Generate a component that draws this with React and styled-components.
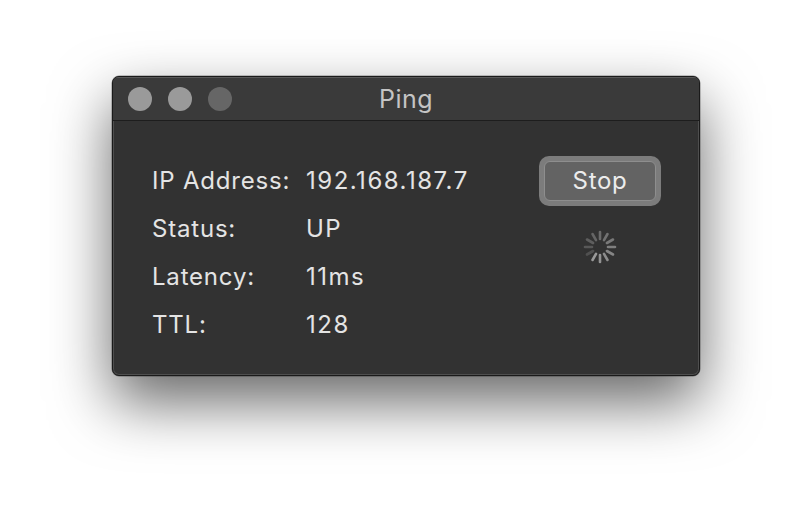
import React from 'react';
import styled, { createGlobalStyle } from 'styled-components';

const GlobalStyle = createGlobalStyle`
  html, body {
    margin: 0;
    padding: 0;
    background: #ffffff;
    font-family: Inter, "Liberation Sans", sans-serif;
  }
`;

const Page = styled.div`
  width: 812px;
  height: 524px;
  padding: 76px 0 0 112px;
  box-sizing: border-box;
`;

const Window = styled.div`
  width: 588px;
  height: 300px;
  border-radius: 7px;
  background: #323232;
  border: 1px solid #1a1a1a;
  box-sizing: border-box;
  box-shadow: 0 0 0 0.5px rgba(0, 0, 0, 0.4), inset 0 0 0 1px #4e4e4e,
    0 26px 60px rgba(0, 0, 0, 0.6);
  overflow: hidden;
  display: flex;
  flex-direction: column;
`;

const TitleBar = styled.div`
  height: 43px;
  flex-shrink: 0;
  background: #3a3a3a;
  border-bottom: 1px solid #1d1d1d;
  box-shadow: inset 0 1px 0 #585858;
  display: flex;
  align-items: center;
  padding-left: 15px;
  position: relative;
`;

const Lights = styled.div`
  display: flex;
  gap: 16px;
`;

const Light = styled.span`
  width: 24px;
  height: 24px;
  border-radius: 50%;
  background: ${(p) => (p.dim ? '#666666' : '#9a9a9a')};
`;

const Title = styled.div`
  position: absolute;
  left: 0;
  right: 0;
  top: 0;
  bottom: 0;
  display: flex;
  align-items: center;
  justify-content: center;
  color: #c4c4c4;
  font-size: 25px;
  letter-spacing: 0.5px;
  pointer-events: none;
`;

const Body = styled.div`
  flex: 1;
  display: flex;
  padding: 35px 38px 0 39px;
`;

const Info = styled.div`
  flex: 1;
  display: grid;
  grid-template-columns: 154px auto;
  grid-auto-rows: 48px;
  align-items: center;
  color: #e4e4e4;
  font-size: 24px;
  letter-spacing: 0.8px;
`;

const Value = styled.span`
  letter-spacing: 1.5px;
`;

const Side = styled.div`
  display: flex;
  flex-direction: column;
  align-items: center;
`;

const FocusRing = styled.div`
  padding: 5px;
  border-radius: 10px;
  background: #7c7c7c;
`;

const Button = styled.button`
  width: 112px;
  height: 40px;
  border-radius: 6px;
  border: 1px solid #8e8e8e;
  background: #636363;
  color: #ececec;
  font-family: inherit;
  font-size: 24px;
  letter-spacing: 0.7px;
  padding: 0 0 2px;
`;

const Spinner = styled.svg`
  margin-top: 24px;
`;

const rows = [
  ['IP Address:', '192.168.187.7'],
  ['Status:', 'UP'],
  ['Latency:', '11ms'],
  ['TTL:', '128'],
];

const spokes = Array.from({ length: 12 }, (_, i) => i);

export default function App() {
  return (
    <Page>
      <GlobalStyle />
      <Window>
        <TitleBar>
          <Lights>
            <Light />
            <Light />
            <Light dim />
          </Lights>
          <Title>Ping</Title>
        </TitleBar>
        <Body>
          <Info>
            {rows.map(([k, v]) => (
              <React.Fragment key={k}>
                <span>{k}</span>
                <Value>{v}</Value>
              </React.Fragment>
            ))}
          </Info>
          <Side>
            <FocusRing>
              <Button>Stop</Button>
            </FocusRing>
            <Spinner width="34" height="34" viewBox="-17 -17 34 34">
              {spokes.map((i) => (
                <line
                  key={i}
                  x1="0"
                  y1="-8"
                  x2="0"
                  y2="-15"
                  stroke="#9a9a9a"
                  strokeWidth="2.6"
                  strokeLinecap="round"
                  opacity={0.3 + (0.7 * ((i + 4) % 12)) / 11}
                  transform={`rotate(${i * 30})`}
                />
              ))}
            </Spinner>
          </Side>
        </Body>
      </Window>
    </Page>
  );
}
